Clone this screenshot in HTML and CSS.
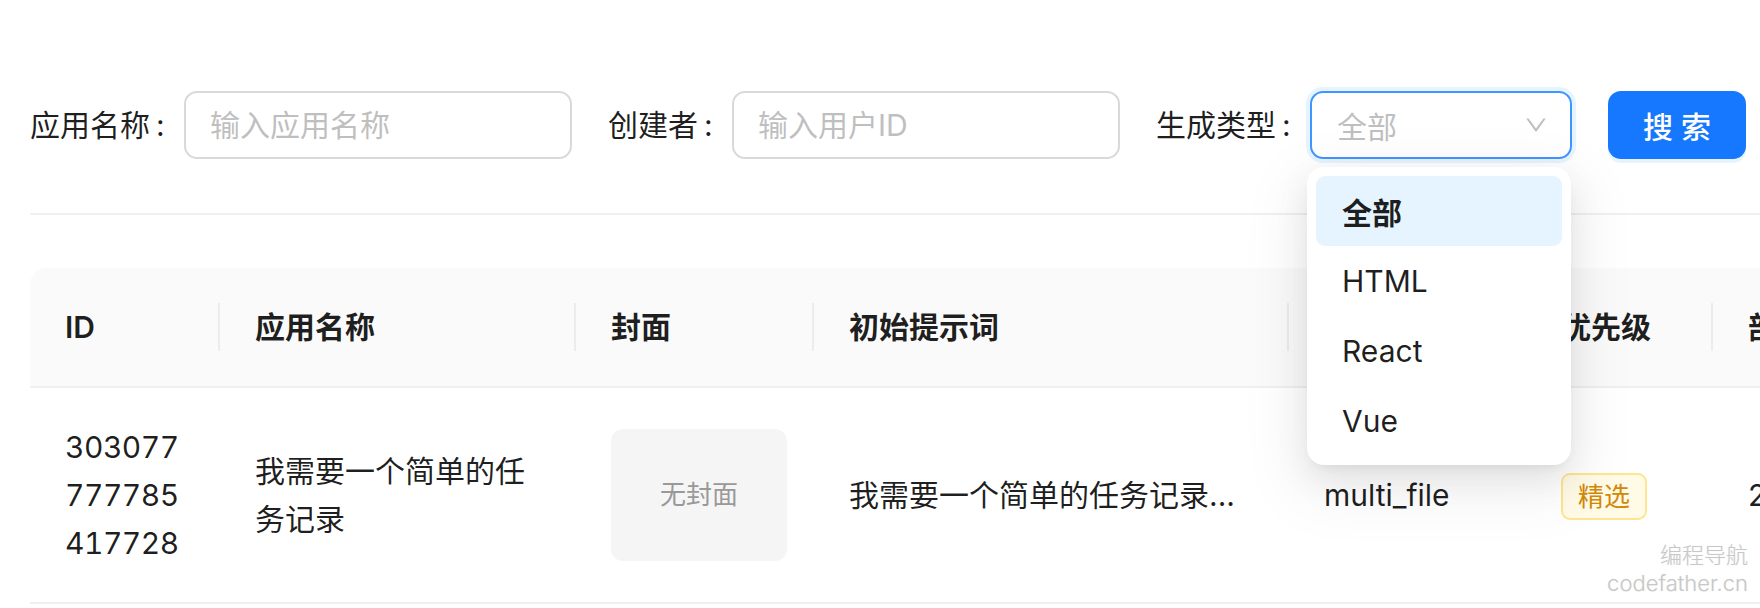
FILE: index.html
```html
<!DOCTYPE html>
<html lang="zh-CN">
<head>
<meta charset="utf-8">
<title>应用管理</title>
<link rel="stylesheet" href="styles.css">
</head>
<body>
<div class="page">
  <form class="search-form">
    <div class="form-item">
      <label class="form-label">应用名称<span class="colon">:</span></label>
      <input class="text-input" type="text" placeholder="输入应用名称">
    </div>
    <div class="form-item">
      <label class="form-label">创建者<span class="colon">:</span></label>
      <input class="text-input" type="text" placeholder="输入用户ID">
    </div>
    <div class="form-item">
      <label class="form-label">生成类型<span class="colon">:</span></label>
      <div class="select">
        <span class="select-value">全部</span>
        <svg class="chevron" viewBox="0 0 1024 1024" aria-hidden="true"><path d="M884 256h-75c-5.1 0-9.9 2.5-12.9 6.6L512 654.2 227.9 262.6c-3-4.1-7.8-6.6-12.9-6.6h-75c-6.5 0-10.3 7.4-6.5 12.7l352.6 486.1c12.8 17.6 39 17.6 51.7 0l352.6-486.1c3.9-5.3.1-12.7-6.4-12.7z"/></svg>
        <div class="dropdown">
          <div class="option selected">全部</div>
          <div class="option">HTML</div>
          <div class="option">React</div>
          <div class="option">Vue</div>
        </div>
      </div>
    </div>
    <button class="btn-primary" type="button">搜 索</button>
  </form>

  <div class="divider"></div>

  <div class="table-wrap">
    <table class="data-table">
      <colgroup>
        <col class="c-id"><col class="c-name"><col class="c-cover"><col class="c-prompt"><col class="c-type"><col class="c-priority"><col class="c-deploy">
      </colgroup>
      <thead>
        <tr>
          <th>ID</th>
          <th>应用名称</th>
          <th>封面</th>
          <th>初始提示词</th>
          <th>生成类型</th>
          <th>优先级</th>
          <th>部署时间</th>
        </tr>
      </thead>
      <tbody>
        <tr>
          <td><span class="id-text">303077777785417728</span></td>
          <td>我需要一个简单的任务记录</td>
          <td><div class="cover">无封面</div></td>
          <td class="nowrap">我需要一个简单的任务记录...</td>
          <td>multi_file</td>
          <td><span class="tag">精选</span></td>
          <td class="nowrap">2025-08-08 12:30:45</td>
        </tr>
      </tbody>
    </table>
  </div>

  <div class="watermark">
    <div>编程导航</div>
    <div>codefather.cn</div>
  </div>
</div>
</body>
</html>
```

FILE: styles.css
```css
html, body {
  margin: 0;
  padding: 0;
  overflow: hidden;
  background: #ffffff;
}

body {
  font-family: Inter, "Noto Sans CJK SC", sans-serif;
  font-size: 30px;
  color: rgba(0, 0, 0, 0.88);
}

.page {
  position: relative;
  height: 608px;
  box-sizing: border-box;
  padding: 91px 0 0 30px;
}

/* search form */
.search-form {
  display: flex;
  align-items: center;
  gap: 36px;
  margin: 0;
}

.form-item {
  display: flex;
  align-items: center;
}

.form-label {
  display: flex;
  align-items: center;
  white-space: nowrap;
  line-height: 48px;
}

.colon {
  width: 34px;
  padding-left: 6px;
  box-sizing: border-box;
}

.text-input {
  width: 388px;
  height: 68px;
  box-sizing: border-box;
  border: 2px solid #d9d9d9;
  border-radius: 13px;
  padding: 0 24px;
  font: inherit;
  color: inherit;
  background: #fff;
  outline: none;
}

.text-input::placeholder {
  color: #bfbfbf;
}

.select {
  position: relative;
  width: 262px;
  height: 68px;
  box-sizing: border-box;
  border: 2px solid #4096ff;
  border-radius: 13px;
  padding: 0 21px 0 25px;
  display: flex;
  align-items: center;
  justify-content: space-between;
  background: #fff;
  box-shadow: 0 0 0 4px rgba(5, 145, 255, 0.1);
}

.select-value {
  color: #bfbfbf;
}

.chevron {
  width: 26px;
  height: 26px;
  fill: #bfbfbf;
}

.dropdown {
  position: absolute;
  top: calc(100% + 10px);
  left: -5px;
  width: 264px;
  box-sizing: border-box;
  padding: 9px;
  background: #fff;
  border-radius: 17px;
  box-shadow: 0 13px 34px 0 rgba(0, 0, 0, 0.08),
              0 6px 13px -8px rgba(0, 0, 0, 0.12),
              0 19px 59px 17px rgba(0, 0, 0, 0.05);
  z-index: 10;
}

.option {
  height: 70px;
  display: flex;
  align-items: center;
  padding: 0 26px;
  border-radius: 9px;
  color: rgba(0, 0, 0, 0.88);
}

.option.selected {
  background: #e6f4ff;
  font-weight: 600;
}

.btn-primary {
  height: 68px;
  padding: 0 35px;
  border: none;
  border-radius: 13px;
  background: #1677ff;
  color: #fff;
  font: inherit;
  font-weight: 500;
  box-shadow: 0 4px 0 rgba(5, 145, 255, 0.1);
  white-space: nowrap;
}

/* divider */
.divider {
  height: 2px;
  background: #f0f0f0;
  margin-top: 54px;
}

/* table */
.table-wrap {
  margin-top: 53px;
}

.data-table {
  border-collapse: separate;
  border-spacing: 0;
  table-layout: fixed;
  width: 1990px;
}

.c-id { width: 190px; }
.c-name { width: 356px; }
.c-cover { width: 238px; }
.c-prompt { width: 475px; }
.c-type { width: 237px; }
.c-priority { width: 187px; }
.c-deploy { width: 307px; }

.data-table th,
.data-table td {
  padding: 35px;
  text-align: left;
  line-height: 48px;
  vertical-align: middle;
}

.data-table th {
  position: relative;
  background: #fafafa;
  font-weight: 600;
  white-space: nowrap;
  border-bottom: 2px solid #f0f0f0;
}

.data-table th:first-child {
  border-top-left-radius: 17px;
}

.data-table th:not(:last-child)::before {
  content: "";
  position: absolute;
  right: 0;
  top: 50%;
  width: 2px;
  height: 48px;
  transform: translateY(-50%);
  background: #ececec;
}

.data-table td {
  border-bottom: 2px solid #f0f0f0;
}

.nowrap {
  white-space: nowrap;
  overflow: hidden;
}

.id-text {
  display: block;
  max-width: 6.4ch;
  word-break: break-all;
  font-variant-numeric: tabular-nums;
  letter-spacing: -0.5px;
}

.cover {
  width: 176px;
  height: 132px;
  border-radius: 12px;
  background: #f5f5f5;
  display: flex;
  align-items: center;
  justify-content: center;
  font-size: 26px;
  color: #999;
}

.tag {
  display: inline-block;
  vertical-align: middle;
  height: 47px;
  line-height: 43px;
  box-sizing: border-box;
  padding: 0 15px;
  font-size: 26px;
  color: #d48806;
  background: #fffbe6;
  border: 2px solid #ffe58f;
  border-radius: 9px;
}

/* watermark */
.watermark {
  position: absolute;
  right: 12px;
  bottom: 11px;
  text-align: right;
  font-size: 22px;
  line-height: 28px;
  font-weight: 300;
  color: #c8c8c8;
  text-shadow: 0 0 2px #ffffff, 0 0 1px rgba(0, 0, 0, 0.15);
  pointer-events: none;
}
```
